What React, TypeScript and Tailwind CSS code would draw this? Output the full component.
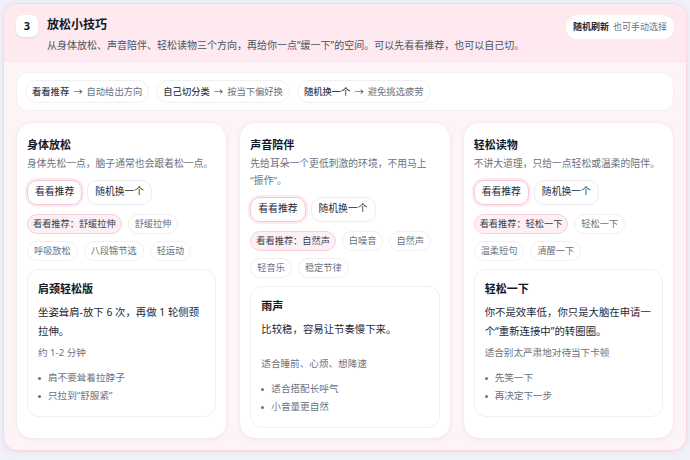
const font = { fontFamily: '"Noto Sans", "Noto Sans CJK SC", sans-serif' };

type Section = {
  title: string;
  desc: string;
  pick: string;
  chips: string[];
  cardTitle: string;
  body: string;
  note: string;
  bullets: string[];
};

const sections: Section[] = [
  {
    title: "身体放松",
    desc: "身体先松一点，脑子通常也会跟着松一点。",
    pick: "看看推荐：舒缓拉伸",
    chips: ["舒缓拉伸", "呼吸放松", "八段锦节选", "轻运动"],
    cardTitle: "肩颈轻松版",
    body: "坐姿耸肩-放下 6 次，再做 1 轮侧颈拉伸。",
    note: "约 1-2 分钟",
    bullets: ["肩不要耸着拉脖子", "只拉到“舒服紧”"],
  },
  {
    title: "声音陪伴",
    desc: "先给耳朵一个更低刺激的环境，不用马上\u200B“振作”。",
    pick: "看看推荐：自然声",
    chips: ["白噪音", "自然声", "轻音乐", "稳定节律"],
    cardTitle: "雨声",
    body: "比较稳，容易让节奏慢下来。",
    note: "适合睡前、心烦、想降速",
    bullets: ["适合搭配长呼气", "小音量更自然"],
  },
  {
    title: "轻松读物",
    desc: "不讲大道理，只给一点轻松或温柔的陪伴。",
    pick: "看看推荐：轻松一下",
    chips: ["轻松一下", "温柔短句", "清醒一下"],
    cardTitle: "轻松一下",
    body: "你不是效率低，你只是大脑在申请一个“重新连接中”的转圈圈。",
    note: "适合别太严肃地对待当下卡顿",
    bullets: ["先笑一下", "再决定下一步"],
  },
];

const flow = [
  ["看看推荐", "自动给出方向"],
  ["自己切分类", "按当下偏好换"],
  ["随机换一个", "避免挑选疲劳"],
];

function SectionCard({ s }: { s: Section }) {
  return (
    <div className="flex flex-col rounded-2xl border border-[#f6e9ee] bg-white px-[10px] pt-[13px] pb-[10px] shadow-[0_1px_3px_rgba(236,200,215,0.25)]">
      <div className="text-[11px] font-bold leading-[18px] text-[#111827]">{s.title}</div>
      <div className="mt-px text-[9.8px] leading-[17px] text-[#6b7280]">{s.desc}</div>
      <div className="mt-2 flex gap-[5px]">
        <button className="h-[25px] rounded-[10px] border border-[#f7c6d5] bg-white px-[7px] text-[9.8px] text-[#1f2937] shadow-[0_0_0_2px_rgba(251,222,231,0.6)]">
          看看推荐
        </button>
        <button className="h-[25px] rounded-[10px] border border-[#eeeef2] bg-white px-[7px] text-[9.8px] text-[#1f2937]">
          随机换一个
        </button>
      </div>
      <div className="mt-[9px] flex flex-wrap gap-x-[6px] gap-y-[7px]">
        <span className="flex h-5 items-center rounded-full border border-[#f8cfdb] bg-[#fdf0f4] px-[5px] text-[9.2px] text-[#374151]">
          {s.pick}
        </span>
        {s.chips.map((c) => (
          <span
            key={c}
            className="flex h-5 items-center rounded-full border border-[#f0f0f3] bg-white px-[6px] text-[9.2px] text-[#6b7280]"
          >
            {c}
          </span>
        ))}
      </div>
      <div className="mt-[8px] rounded-xl border border-[#f3eef1] bg-white px-[10px] pt-[10px] pb-[11px]">
        <div className="text-[11px] font-bold leading-[18px] text-[#111827]">{s.cardTitle}</div>
        <div className="mt-[5px] min-h-[32px] text-[10.4px] leading-[19px] text-[#1f2937]">{s.body}</div>
        <div className="mt-[3px] text-[9.6px] leading-[17px] text-[#6b7280]">{s.note}</div>
        <ul className="mt-[8px] flex flex-col">
          {s.bullets.map((b) => (
            <li key={b} className="flex items-center gap-[7px] text-[9.6px] leading-[18px] text-[#6b7280]">
              <span className="h-[3px] w-[3px] rounded-full bg-[#6b7280]" />
              {b}
            </li>
          ))}
        </ul>
      </div>
    </div>
  );
}

export default function App() {
  return (
    <div className="h-[460px] w-[690px] bg-[#eff0f8] p-[3px]" style={font}>
      <div className="overflow-hidden rounded-[14px] border border-[#fbd5e0] bg-[#fdf4f7] shadow-[0_1px_4px_rgba(230,200,215,0.4)]">
        <div className="flex items-start justify-between border-b border-[#fbe3ea] bg-[#fde9ef] px-[12px] pt-[11px] pb-[8px]">
          <div className="flex gap-[9px]">
            <div className="flex h-[22px] w-[22px] items-center justify-center rounded-[7px] bg-white text-[11px] font-bold text-[#111827] shadow-[0_1px_2px_rgba(200,170,185,0.3)]">
              3
            </div>
            <div>
              <div className="text-[12px] font-bold leading-[20px] text-[#111827]">放松小技巧</div>
              <div className="mt-[2px] text-[10px] leading-[16px] text-[#4b5563]">
                从身体放松、声音陪伴、轻松读物三个方向，再给你一点“缓一下”的空间。可以先看看推荐，也可以自己切。
              </div>
            </div>
          </div>
          <div className="flex h-6 shrink-0 items-center gap-[4px] rounded-full bg-white px-[7px] text-[9px]">
            <span className="font-bold text-[#1f2937]">随机刷新</span>
            <span className="text-[#6b7280]">也可手动选择</span>
          </div>
        </div>
        <div className="px-[12px] pt-[10px] pb-[11px]">
          <div className="flex gap-[7px] rounded-xl border border-[#f6eef1] bg-white px-[8px] py-[7px]">
            {flow.map(([a, b]) => (
              <span
                key={a}
                className="flex h-[23px] items-center gap-[4px] rounded-full border border-[#f0eff3] bg-white px-[6px] text-[9.3px]"
              >
                <span className="font-medium text-[#374151]">{a}</span>
                <span className="text-[#374151]">→</span>
                <span className="text-[#6b7280]">{b}</span>
              </span>
            ))}
          </div>
          <div className="mt-[11px] grid grid-cols-3 gap-3">
            {sections.map((s) => (
              <SectionCard key={s.title} s={s} />
            ))}
          </div>
        </div>
      </div>
    </div>
  );
}
